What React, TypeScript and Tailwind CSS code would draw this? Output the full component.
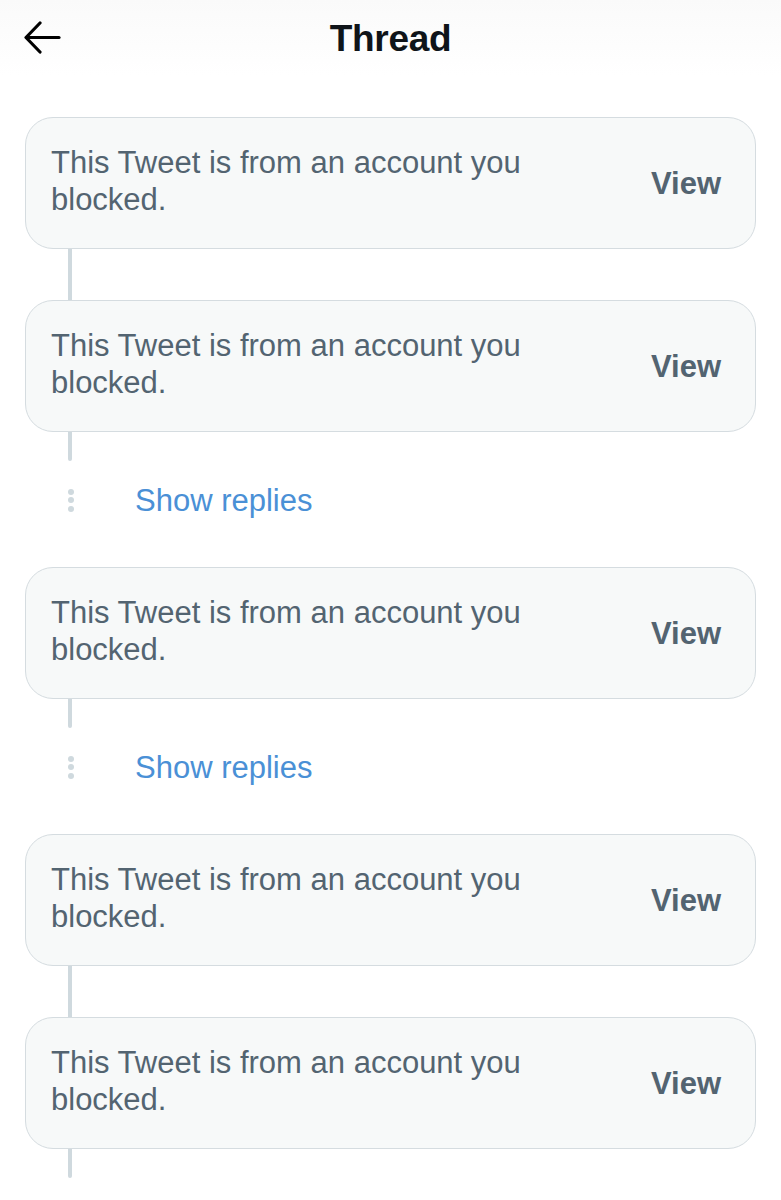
import { Fragment } from 'react';

type Item = { kind: 'tweet'; tail: 'long' | 'short' | 'none' } | { kind: 'replies' };

const items: Item[] = [
  { kind: 'tweet', tail: 'long' },
  { kind: 'tweet', tail: 'short' },
  { kind: 'replies' },
  { kind: 'tweet', tail: 'short' },
  { kind: 'replies' },
  { kind: 'tweet', tail: 'long' },
  { kind: 'tweet', tail: 'short' },
];

const BlockedCard = () => (
  <div className="flex items-center justify-between h-[132px] rounded-[28px] border border-[#d5dce0] bg-[#f7f9f9] pl-[25px] pr-[34px]">
    <p className="text-[31px] leading-[37px] text-[#536471] max-w-[500px] -mt-[5px]">
      This Tweet is from an account you blocked.
    </p>
    <span className="text-[31px] font-bold text-[#536471] leading-none">View</span>
  </div>
);

const ThreadLine = ({ tail }: { tail: 'long' | 'short' | 'none' }) => {
  if (tail === 'none') return null;
  return (
    <div
      className={
        tail === 'long'
          ? 'ml-[43px] w-[4px] h-[51px] bg-[#cfd9de]'
          : 'ml-[43px] w-[4px] h-[29px] bg-[#cfd9de] rounded-b-full'
      }
    />
  );
};

const ShowReplies = () => (
  <div className="flex items-center h-[78px] mb-[28px]">
    <div className="w-[110px] flex flex-col items-start pl-[43px] gap-[2.5px]">
      <span className="block w-[6px] h-[6px] rounded-full bg-[#cfd9de]" />
      <span className="block w-[6px] h-[6px] rounded-full bg-[#cfd9de]" />
      <span className="block w-[6px] h-[6px] rounded-full bg-[#cfd9de]" />
    </div>
    <span className="text-[31px] text-[#4a90d6] leading-none">Show replies</span>
  </div>
);

export default function App() {
  return (
    <div className="min-h-screen bg-white" style={{ fontFamily: '"Liberation Sans", Arial, sans-serif' }}>
      <header className="relative flex items-center justify-center h-[76px] bg-gradient-to-b from-[#fafafa] to-white">
        <button className="absolute left-[24px] top-[21px] text-black" aria-label="Back">
          <svg width="37" height="33" viewBox="0 0 37 33" fill="none" stroke="currentColor" strokeWidth="3.2" strokeLinecap="round" strokeLinejoin="round">
            <path d="M35 16.5H3" />
            <path d="M16 2L2 16.5L16 31" />
          </svg>
        </button>
        <h1 className="text-[37px] font-bold text-[#0f1419] tracking-[-0.3px] leading-none">Thread</h1>
      </header>

      <main className="px-[25px] pt-[41px]">
        {items.map((item, i) => (
          <Fragment key={i}>
            {item.kind === 'tweet' ? (
              <>
                <BlockedCard />
                <ThreadLine tail={item.tail} />
              </>
            ) : (
              <ShowReplies />
            )}
          </Fragment>
        ))}
      </main>
    </div>
  );
}
